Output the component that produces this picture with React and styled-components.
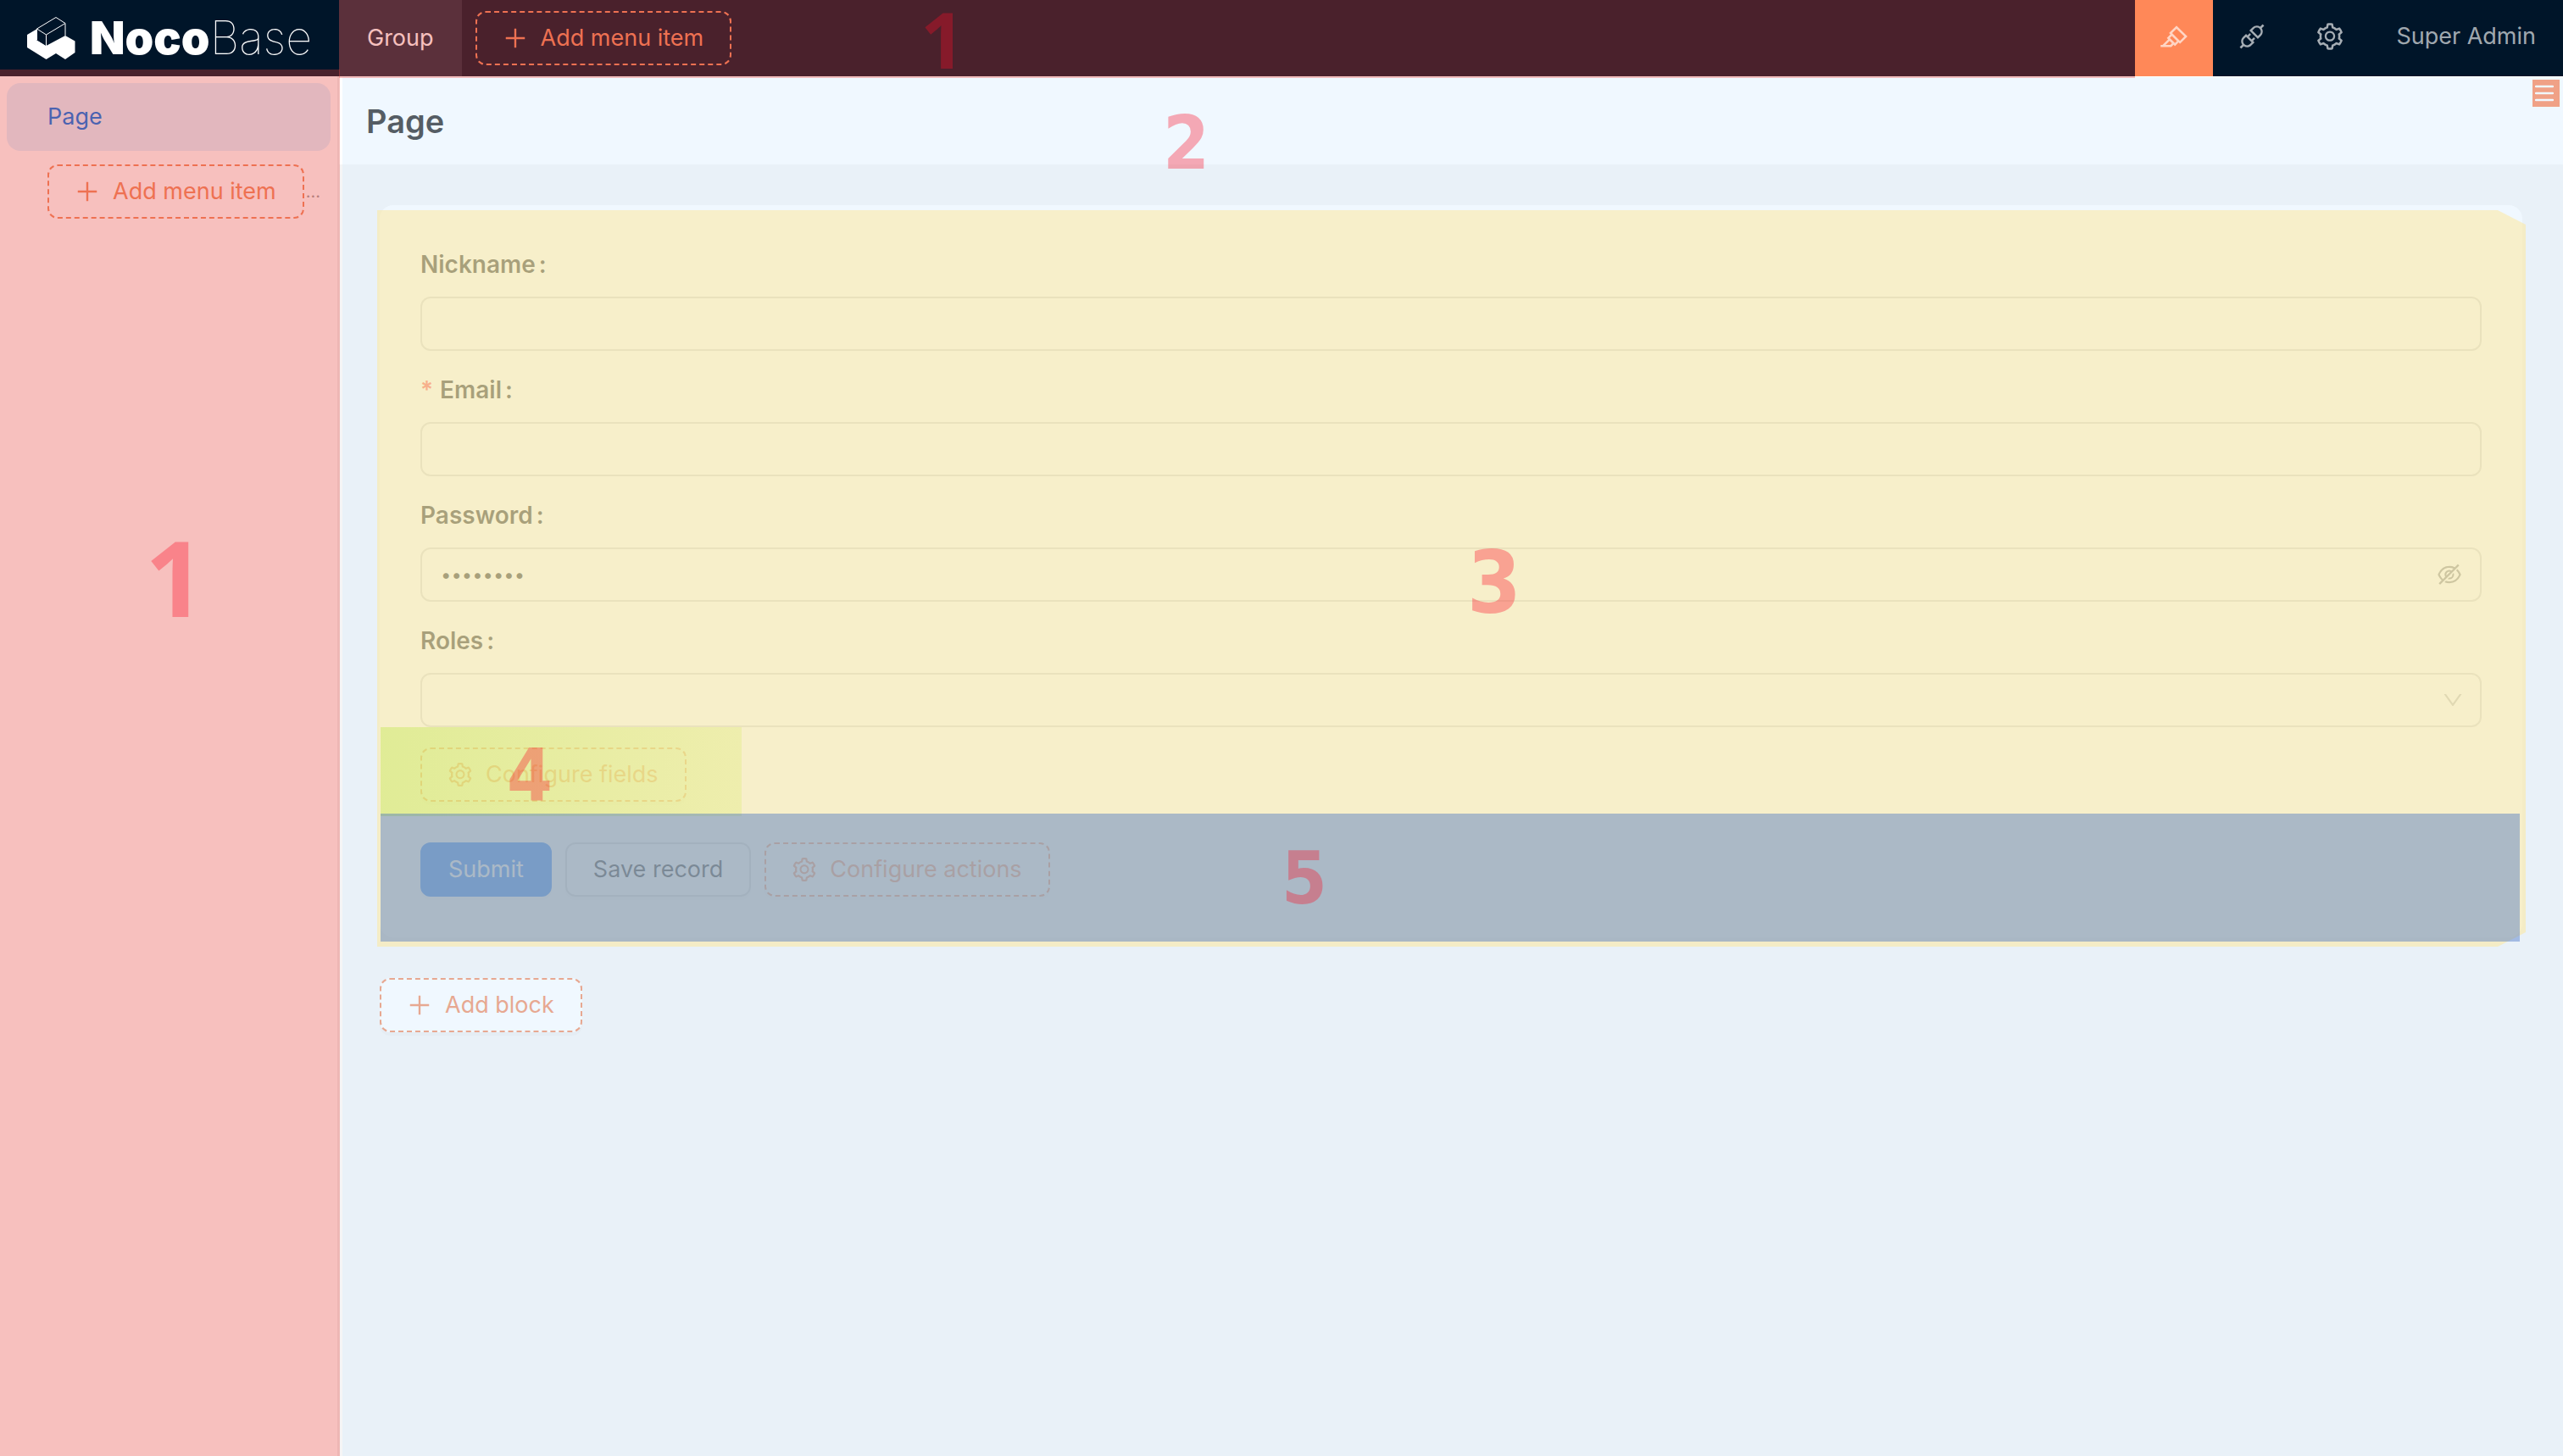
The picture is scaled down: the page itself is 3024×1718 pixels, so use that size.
import React from 'react';
import styled, { createGlobalStyle } from 'styled-components';
import {
  AiOutlineApi,
  AiOutlineDown,
  AiOutlineEyeInvisible,
  AiOutlineHighlight,
  AiOutlinePlus,
  AiOutlineSetting,
} from 'react-icons/ai';

const GlobalStyle = createGlobalStyle`
  *, *::before, *::after { box-sizing: border-box; }
  body {
    margin: 0;
    font-family: Inter, "Liberation Sans", sans-serif;
    font-size: 27px;
    line-height: 44px;
    color: #1f1f1f;
  }
  button, input, select { font: inherit; color: inherit; margin: 0; }
`;

const Page = styled.div`
  display: flex;
  flex-direction: column;
  min-height: 100vh;
  background: #f5f5f5;
`;

const Header = styled.header`
  display: flex;
  height: 90px;
  background: #001529;
`;

const Logo = styled.a`
  display: flex;
  align-items: center;
  gap: 16px;
  width: 400px;
  padding-left: 30px;
  color: #fff;
  text-decoration: none;
  font-size: 54px;
  line-height: 88px;
  font-weight: 100;

  b { font-weight: 900; }
`;

const TopMenu = styled.nav`
  position: relative;
  flex: 1;
  display: flex;
  align-items: center;
  gap: 16px;
`;

const TopMenuItem = styled.a`
  padding: 0 33px;
  line-height: 90px;
  color: #fff;
  background: rgba(255, 255, 255, 0.1);
  text-decoration: none;
`;

const ToolButton = styled.button`
  display: flex;
  align-items: center;
  justify-content: center;
  width: 92px;
  height: 90px;
  padding: 0 0 4px;
  border: 0;
  background: ${(p) => (p.$active ? '#ff8858' : 'transparent')};
  color: rgba(255, 255, 255, 0.65);

  svg { width: 36px; height: 36px; }
`;

const UserButton = styled.button`
  padding: 0 32px 4px;
  border: 0;
  background: transparent;
  color: rgba(255, 255, 255, 0.65);
`;

const Body = styled.div`
  flex: 1;
  display: flex;
`;

const Sidebar = styled.aside`
  position: relative;
  width: 400px;
  padding: 8px;
  background: #fff;
  border-right: 2px solid #f0f0f0;
`;

const SideItem = styled.a`
  display: block;
  height: 80px;
  padding: 0 48px;
  border-radius: 16px;
  background: #e0f2ff;
  color: #0077ec;
  line-height: 80px;
  text-decoration: none;
`;

const SideAdd = styled.div`
  display: flex;
  align-items: center;
  gap: 2px;
  padding: 16px 0 0 48px;
  color: #a0a0a0;
  font-size: 20px;
`;

const Button = styled.button`
  display: inline-flex;
  align-items: center;
  gap: 16px;
  height: 64px;
  padding: 0 31px;
  border: 2px solid #d9d9d9;
  border-radius: 12px;
  background: #fff;
  box-shadow: 0 4px 0 rgba(0, 0, 0, 0.02);
  font-size: 27px;
  white-space: nowrap;

  svg { width: 32px; height: 32px; margin: 0 -2px; }
`;

const PrimaryButton = styled(Button)`
  border-color: #1677ff;
  background: #1677ff;
  color: #fff;
`;

const DesignButton = styled(Button)`
  border: 2px dashed #f28b60;
  background: ${(p) => (p.$ghost ? 'transparent' : '#fff')};
  box-shadow: ${(p) => (p.$ghost ? 'none' : '0 4px 0 rgba(0, 0, 0, 0.02)')};
  color: #f28b60;
`;

const Main = styled.main`
  position: relative;
  flex: 1;
  min-width: 0;
`;

const PageHeader = styled.div`
  display: flex;
  justify-content: space-between;
  align-items: flex-start;
  height: 104px;
  padding: 4px 4px 0 32px;
  background: #fff;
`;

const Title = styled.h1`
  margin: 0;
  font-size: 38px;
  line-height: 98px;
  font-weight: 600;
`;

const DesignerHandle = styled.button`
  display: flex;
  align-items: center;
  width: 32px;
  height: 32px;
  padding: 0 0 0 3px;
  border: 0;
  background: #ff8150;
  color: #fff;
`;

const Content = styled.div`
  display: flex;
  flex-direction: column;
  align-items: flex-start;
  gap: 48px;
  padding: 48px;
`;

const Card = styled.section`
  position: relative;
  width: 100%;
  padding: 48px;
  border-radius: 16px;
  background: #fff;
`;

const Form = styled.form`
  display: flex;
  flex-direction: column;
  gap: 24px;
`;

const Label = styled.label`
  display: flex;
  padding-bottom: 16px;
  font-size: 28px;
  font-weight: 600;
`;

const Required = styled.span`
  margin-right: 8px;
  color: #ff4d4f;
`;

const Colon = styled.span`
  margin-left: 4px;
`;

const Control = styled.div`
  display: flex;
  align-items: center;
  height: 64px;
  padding: 0 22px;
  border: 2px solid #d9d9d9;
  border-radius: 12px;
  background: #fff;

  input, select {
    flex: 1;
    min-width: 0;
    padding: 0;
    border: 0;
    outline: 0;
    appearance: none;
    background: transparent;
  }

  input[type='password'] { font-size: 22px; }
`;

const EyeButton = styled.button`
  display: flex;
  padding: 0;
  border: 0;
  background: transparent;
  color: rgba(0, 0, 0, 0.45);

  svg { width: 32px; height: 32px; margin-right: -2px; }
`;

const Arrow = styled(AiOutlineDown)`
  width: 28px;
  height: 28px;
  margin-right: -4px;
  color: rgba(0, 0, 0, 0.25);
`;

const FieldsRow = styled.div`
  position: relative;
  display: flex;
`;

const ActionsRow = styled.div`
  display: flex;
  gap: 16px;
  padding-top: 24px;
`;

const Region = styled.div`
  position: absolute;
  pointer-events: none;
`;

const MenuRegion = styled(Region)`
  z-index: 5;
  background: rgba(230, 58, 52, 0.32);
`;

const TopRegion = styled(MenuRegion)`
  inset: 0 0 -2px 0;
`;

const SideRegion = styled(MenuRegion)`
  inset: -8px -3px 0 0;
`;

const PageRegion = styled(Region)`
  z-index: 1;
  inset: 1px 0 0 4px;
  background: rgba(206, 232, 255, 0.31);
`;

const BlockRegion = styled(Region)`
  z-index: 2;
  inset: 6px -4px -11px -3px;
  background: rgba(255, 230, 147, 0.49);
  clip-path: polygon(0 0, calc(100% - 33px) 0, 100% 17px, 100% calc(100% - 17px), calc(100% - 33px) 100%, 0 100%);
`;

const FieldsRegion = styled(Region)`
  z-index: 3;
  top: -24px;
  left: -47px;
  width: 426px;
  height: 105px;
  background: linear-gradient(90deg, rgba(195, 232, 84, 0.44), rgba(227, 236, 136, 0.44));
`;

const ActionsRegion = styled(Region)`
  z-index: 4;
  left: 1px;
  right: 3px;
  bottom: -5px;
  height: 151px;
  background: rgba(52, 100, 192, 0.39);
`;

const Mark = styled.span`
  position: absolute;
  left: ${(p) => p.$x}px;
  top: ${(p) => p.$y}px;
  color: rgba(253, 16, 38, 0.34);
  font-family: ${(p) => (p.$plain ? '"Noto Sans"' : '"DejaVu Sans Condensed", "DejaVu Sans"')}, sans-serif;
  font-size: ${(p) => p.$size}px;
  font-weight: 700;
  line-height: 1;
`;

function LogoIcon() {
  return (
    <svg width="60" height="54" viewBox="30 17 60 54" aria-hidden="true">
      <path d="M32 40 43 33.500V46L54.500 53 77 41 88.500 47.500V61L77 69 66 62 54.500 69 32 55Z" fill="#fff" />
      <path d="M43.500 33 54.500 40V53L43.500 46Z" fill="#001529" />
      <path d="M43.500 33 66 19.500 77 26.500V41M43.500 33 54.500 40 77 26.500M54.500 40V53M43.500 33V46" fill="none" stroke="#fff" strokeWidth="1" />
    </svg>
  );
}

function MenuLines() {
  return (
    <svg width="22" height="20" viewBox="0 0 22 20" aria-hidden="true">
      <path d="M1 2H21M1 10H21M1 18H21" stroke="currentColor" strokeWidth="2.500" strokeLinecap="round" />
    </svg>
  );
}

function Field({ id, label, required, children }) {
  return (
    <div>
      <Label htmlFor={id}>
        {required && <Required>*</Required>}
        {label}
        <Colon>:</Colon>
      </Label>
      <Control>{children}</Control>
    </div>
  );
}

export default function App() {
  return (
    <>
      <GlobalStyle />
      <Page>
        <Header>
          <Logo href="#">
            <LogoIcon />
            <span><b>Noco</b>Base</span>
          </Logo>
          <TopMenu>
            <TopMenuItem href="#">Group</TopMenuItem>
            <DesignButton type="button" $ghost><AiOutlinePlus />Add menu item</DesignButton>
            <TopRegion><Mark $plain $x={686} $y={0} $size={92}>1</Mark></TopRegion>
          </TopMenu>
          <ToolButton type="button" aria-label="UI editor" $active><AiOutlineHighlight /></ToolButton>
          <ToolButton type="button" aria-label="Plugins"><AiOutlineApi /></ToolButton>
          <ToolButton type="button" aria-label="Settings"><AiOutlineSetting /></ToolButton>
          <UserButton type="button">Super Admin</UserButton>
        </Header>
        <Body>
          <Sidebar>
            <SideItem href="#">Page</SideItem>
            <SideAdd>
              <DesignButton type="button" $ghost><AiOutlinePlus />Add menu item</DesignButton>
              …
            </SideAdd>
            <SideRegion><Mark $plain $x={171} $y={536} $size={124}>1</Mark></SideRegion>
          </Sidebar>
          <Main>
            <PageHeader>
              <Title>Page</Title>
              <DesignerHandle type="button" aria-label="Page settings"><MenuLines /></DesignerHandle>
            </PageHeader>
            <Content>
              <Card>
                <Form>
                  <Field id="nickname" label="Nickname"><input id="nickname" type="text" /></Field>
                  <Field id="email" label="Email" required><input id="email" type="email" /></Field>
                  <Field id="password" label="Password">
                    <input id="password" type="password" defaultValue="password" />
                    <EyeButton type="button" aria-label="Show password"><AiOutlineEyeInvisible /></EyeButton>
                  </Field>
                  <Field id="roles" label="Roles">
                    <select id="roles"><option value="" /></select>
                    <Arrow />
                  </Field>
                  <FieldsRow>
                    <DesignButton type="button"><AiOutlineSetting />Configure fields</DesignButton>
                    <FieldsRegion><Mark $x={149} $y={13} $size={86}>4</Mark></FieldsRegion>
                  </FieldsRow>
                  <ActionsRow>
                    <PrimaryButton type="button">Submit</PrimaryButton>
                    <Button type="button">Save record</Button>
                    <DesignButton type="button"><AiOutlineSetting />Configure actions</DesignButton>
                  </ActionsRow>
                </Form>
                <BlockRegion><Mark $x={1286} $y={389} $size={102}>3</Mark></BlockRegion>
                <ActionsRegion><Mark $x={1063} $y={33} $size={86}>5</Mark></ActionsRegion>
              </Card>
              <DesignButton type="button"><AiOutlinePlus />Add block</DesignButton>
            </Content>
            <PageRegion><Mark $x={968} $y={34} $size={88}>2</Mark></PageRegion>
          </Main>
        </Body>
      </Page>
    </>
  );
}
